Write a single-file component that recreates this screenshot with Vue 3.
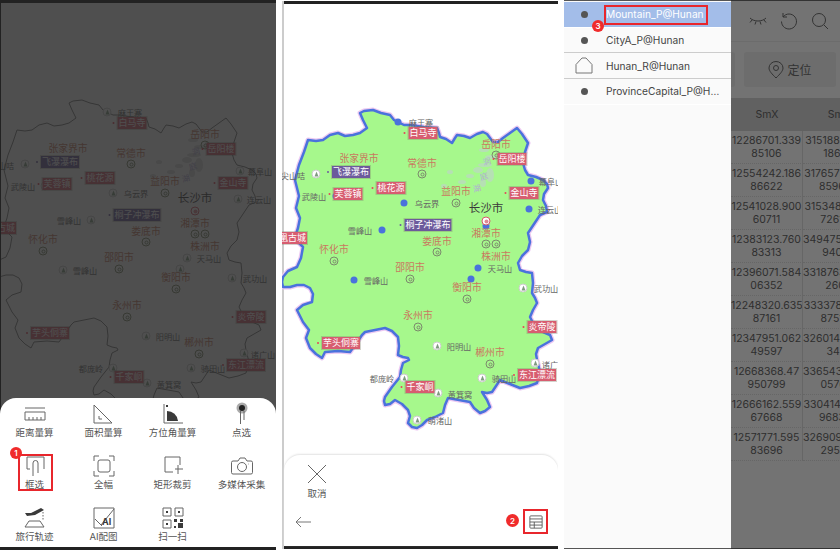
<script setup>
const mapShapes = [
  { kind: 'dim', tree: true },
  { kind: 'live', tree: false },
]

const outline = '360,113 364,111 373,110 381,113 390,115 394,120 398,122 404,125 410,125 424,127 437,128 439,133 440,137 446,139 452,143 455,138 457,135 464,136 470,138 477,134 483,132 487,134 493,142 498,142 503,138 510,133 517,128 522,134 528,143 525,152 523,163 525,170 528,175 536,177 543,180 547,184 548,188 544,194 543,200 546,206 547,212 540,215 534,224 528,233 530,242 528,250 522,256 518,263 520,270 526,272 532,273 533,283 532,293 535,298 537,303 533,310 530,317 534,325 543,332 550,335 552,340 545,344 538,348 536,354 537,360 540,372 537,383 529,386 520,388 510,384 500,380 496,386 492,392 487,393 482,392 487,400 490,407 485,411 480,413 474,408 470,402 459,400 448,398 445,405 443,413 435,417 427,420 422,425 417,428 412,427 408,423 410,416 408,410 402,404 395,400 390,404 385,405 384,401 385,397 392,387 400,377 401,370 403,363 409,360 408,358 403,357 398,355 399,346 398,337 392,331 385,328 375,330 365,332 362,335 360,338 355,345 350,352 338,351 325,352 323,356 322,358 316,354 310,348 306,338 309,330 303,322 297,310 303,305 312,302 313,294 310,288 304,285 297,285 290,287 283,287 282,282 283,277 288,271 297,267 301,258 303,247 298,242 295,237 298,228 300,218 296,208 299,196 295,180 299,165 304,152 308,140 316,141 323,140 330,135 338,133 345,136 353,135 360,133 367,128 363,120'

const pondSpots = [
  [484, 150, 5, 2], [491, 157, 6, 2], [485, 165, 7, 2], [478, 170, 5, 3], [490, 175, 4, 7],
  [470, 176, 4, 2], [462, 182, 4, 2], [483, 183, 3, 4], [450, 172, 3, 2], [444, 186, 3, 2],
]

const cities = [
  ['张家界市', 359, 158], ['常德市', 422, 163], ['岳阳市', 496, 144], ['益阳市', 456, 191],
  ['湘潭市', 486, 233], ['娄底市', 437, 241], ['株洲市', 496, 256], ['怀化市', 334, 249],
  ['邵阳市', 410, 267], ['衡阳市', 467, 287], ['永州市', 418, 315], ['郴州市', 490, 352],
]
const rings = [
  [422, 174], [496, 155], [456, 203], [486, 244], [496, 244], [437, 252],
  [334, 261], [410, 279], [467, 299], [418, 327], [490, 364],
]
const blueDots = [
  [398, 122], [336, 196], [404, 203], [382, 230], [531, 181],
  [529, 209], [478, 268], [354, 280], [471, 279],
]
const trees = [
  [316, 174], [523, 288], [437, 346], [535, 363], [404, 378], [482, 378], [438, 393], [417, 420],
]
const places = [
  ['麻王寨', 421, 122], ['尖山咭', 293, 175], ['武陵山', 314, 196], ['乌云界', 427, 203],
  ['雪峰山', 360, 230], ['幕阜山', 551, 181], ['连云山', 550, 209], ['天马山', 500, 268],
  ['雪峰山', 376, 280], ['武功山', 546, 288], ['阳明山', 459, 346], ['诸广山', 554, 364],
  ['都庞岭', 382, 378], ['骑田山', 504, 378], ['黄箕窝', 460, 394], ['萌渚山', 440, 420],
]
const scenic = [
  ['白马寺', 423, 133, 'red'], ['岳阳楼', 512, 159, 'red'], ['桃花源', 391, 188, 'red'],
  ['芙蓉镇', 348, 194, 'red'], ['金山寺', 524, 193, 'red'], ['凤凰古城', 288, 238, 'red'],
  ['炎帝陵', 542, 327, 'red'], ['芋头侗寨', 341, 343, 'red'], ['千家峒', 420, 387, 'red'],
  ['东江漂流', 537, 375, 'red'], ['飞瀑瀑布', 351, 172, 'purple'], ['桐子冲瀑布', 428, 225, 'purple'],
]
const lake = [['洞', 488, 160], ['庭', 485, 175], ['湖', 478, 187]]

const at = (x, y) => ({ left: `${x - 282}px`, top: `${y}px` })

const tools = [
  { name: '距离量算', lines: ['M2 6h20', 'M2 10h20v8H2z', 'M6 18v-3M10 18v-3M14 18v-3M18 18v-3'] },
  { name: '面积量算', lines: ['M2 3l18 18H2z', 'M7 14v3h3'] },
  { name: '方位角量算', lines: ['M3 2v19h19'], fills: ['M6 9a11 11 0 0 1 11 10H6z', 'M5 3h2v2H5z'] },
  { name: '点选', lines: ['M10.500 9v13', 'M14 9v9'], spot: true },
  { name: '框选', lines: ['M4 15V3h17v12', 'M4 15h3', 'M10 22V9a2.500 2.500 0 0 1 5 0v10'], marked: true },
  { name: '全幅', lines: ['M2 7V2h5', 'M17 2h5v5', 'M22 17v5h-5', 'M7 22H2v-5', 'M8 6h8a2 2 0 0 1 2 2v8a2 2 0 0 1-2 2H8a2 2 0 0 1-2-2V8a2 2 0 0 1 2-2z'] },
  { name: '矩形裁剪', lines: ['M19 11V3H4v15h8', 'M14 15h8', 'M17 11v9'] },
  { name: '多媒体采集', lines: ['M3 7h5l2-3h5l2 3h4a1.500 1.500 0 0 1 1.500 1.500v10A1.500 1.500 0 0 1 21 20H3a1.500 1.500 0 0 1-1.500-1.500v-10A1.500 1.500 0 0 1 3 7z', 'M12 8.500a4.500 4.500 0 1 1 0 9 4.500 4.500 0 0 1 0-9z', 'M18.500 10h.5'] },
  { name: '旅行轨迹', lines: ['M6 15h11l4 6H2z', 'M20 6v8'], fills: ['M2 7h6l10-5 3 2-9 5-8 1z'], dashed: true },
  { name: 'AI配图', lines: ['M2 2h20v20H2z', 'M22 3L9 19', 'M3 13l7 7'], label: 'AI' },
  { name: '扫一扫', lines: ['M2 2h8v8H2z', 'M14 2h8v8h-8z', 'M2 14h8v8H2z'], fills: ['M5 5h2v2H5z', 'M17 5h2v2h-2z', 'M5 17h2v2H5z', 'M13 13h3v3h-3z', 'M19 13h3v3h-3z', 'M13 20h2v2h-2z', 'M17 17h5v5h-5z'] },
]

const layers = [
  { name: 'Mountain_P@Hunan', icon: 'dot', active: true },
  { name: 'CityA_P@Hunan', icon: 'dot' },
  { name: 'Hunan_R@Hunan', icon: 'area' },
  { name: 'ProvinceCapital_P@Hunan', icon: 'dot' },
]

const rows = [
  ['12286701.339', '85106', '3151886.2174', '18642'],
  ['12554242.186', '86622', '3176575.4210', '859603'],
  ['12541028.900', '60711', '3153487.3561', '726148'],
  ['12383123.760', '83313', '3494752.1832', '94037'],
  ['12396071.584', '06352', '3318763.0947', '2604'],
  ['12248320.635', '87161', '3333787.4126', '875129'],
  ['12347951.062', '49597', '3260149.7653', '3421'],
  ['12668368.47', '950799', '3365432.2816', '057613'],
  ['12666162.559', '67668', '3304141.6395', '968302'],
  ['12571771.595', '83696', '3269095.1408', '295187'],
]
</script>

<template>
  <div class="screens">
    <section v-for="shape in mapShapes" :key="shape.kind" class="phone" :class="`phone--${shape.kind}`">
      <div class="map">
        <svg class="map__land" viewBox="282 0 276 550" width="276" height="550">
          <polygon class="map__halo" :points="outline" />
          <polygon class="map__shape" :points="outline" />
          <ellipse v-for="(s, i) in pondSpots" :key="i" class="map__pond" :cx="s[0]" :cy="s[1]" :rx="s[2]" :ry="s[3]" />
        </svg>
        <span v-for="l in lake" :key="l[0]" class="tag tag--lake" :style="at(l[1], l[2])">{{ l[0] }}</span>
        <span v-for="(p, i) in blueDots" :key="'b' + i" class="pin" :class="shape.tree ? 'pin--tree' : 'pin--blue'" :style="at(p[0], p[1])"></span>
        <span v-for="(p, i) in trees" :key="'t' + i" class="pin pin--tree" :style="at(p[0], p[1])"></span>
        <span v-for="(p, i) in rings" :key="'r' + i" class="pin pin--ring" :style="at(p[0], p[1])"></span>
        <span v-if="!shape.tree" class="pin pin--blue" :style="at(486, 226)"></span>
        <span class="pin pin--capital" :style="at(486, 221)"></span>
        <span v-for="c in cities" :key="c[0]" class="tag tag--city" :style="at(c[1], c[2])">{{ c[0] }}</span>
        <span class="tag tag--capital" :style="at(486, 207)">长沙市</span>
        <span v-for="(p, i) in places" :key="'p' + i" class="tag tag--place" :style="at(p[1], p[2])">{{ p[0] }}</span>
        <span v-for="s in scenic" :key="s[0]" class="tag tag--box" :class="`tag--${s[3]}`" :style="at(s[1], s[2])">{{ s[0] }}</span>
      </div>

      <template v-if="shape.kind === 'dim'">
        <div class="phone__shade"></div>
        <div class="tools">
          <div v-for="tool in tools" :key="tool.name" class="tool">
            <svg class="tool__icon" viewBox="0 0 24 24" width="24" height="24">
              <circle v-if="tool.spot" cx="12" cy="6" r="5.500" fill="#aaa" stroke="none" />
              <circle v-if="tool.spot" cx="12" cy="6" r="3" fill="#222" stroke="none" />
              <path v-for="d in tool.lines" :key="d" :d="d" :stroke-dasharray="tool.dashed && d === 'M20 6v8' ? '1.500 1.500' : null" />
              <path v-for="d in tool.fills" :key="d" :d="d" class="tool__fill" />
              <text v-if="tool.label" x="10" y="19" class="tool__glyph">{{ tool.label }}</text>
            </svg>
            <span class="tool__name">{{ tool.name }}</span>
            <span v-if="tool.marked" class="tool__mark"></span>
            <span v-if="tool.marked" class="badge tool__badge">1</span>
          </div>
        </div>
      </template>

      <div v-else class="actions">
        <button class="actions__cancel">
          <svg viewBox="0 0 20 20" width="20" height="20"><path d="M1 1l18 18M19 1L1 19" /></svg>
          <span>取消</span>
        </button>
        <div class="actions__bar">
          <svg viewBox="0 0 16 12" width="16" height="12"><path d="M6 1L1 6l5 5M1 6h15" /></svg>
          <span class="badge actions__badge">2</span>
          <span class="actions__table">
            <svg viewBox="0 0 16 16" width="14" height="14"><path d="M2 1h12a1 1 0 0 1 1 1v12a1 1 0 0 1-1 1H2a1 1 0 0 1-1-1V2a1 1 0 0 1 1-1z" /><path d="M1 4.500h14M1 8h14M1 11.500h14M6 8v7" /></svg>
          </span>
        </div>
      </div>
    </section>

    <section class="phone phone--data">
      <aside class="layers">
        <div v-for="layer in layers" :key="layer.name" class="layer" :class="{ 'layer--active': layer.active }">
          <span class="layer__icon">
            <i v-if="layer.icon === 'dot'" class="layer__dot"></i>
            <svg v-else viewBox="0 0 18 17" width="18" height="17"><path d="M1 7.500L7 1h4l6 6.500V16H1z" /></svg>
          </span>
          <span class="layer__name">{{ layer.name }}</span>
          <template v-if="layer.active">
            <span class="layer__mark"></span>
            <span class="badge layer__badge">3</span>
          </template>
        </div>
      </aside>

      <div class="attrs">
        <div class="attrs__tools">
          <svg viewBox="0 0 18 10" width="18" height="10"><path d="M1 2c4 4 12 4 16 0M3 4L1 6.500M7 5.500L6 8.500M11 5.500l1 3M15 4l2 2.500" /></svg>
          <svg viewBox="0 0 18 18" width="18" height="18"><path d="M3 5a7.500 7.500 0 1 1-1.500 4.500M3 1v4h4" /></svg>
          <svg viewBox="0 0 18 18" width="18" height="18"><path d="M8 1.500a6.500 6.500 0 1 1 0 13 6.500 6.500 0 0 1 0-13zM13 13l4 4" /></svg>
        </div>
        <div class="attrs__buttons">
          <span class="attrs__button"></span>
          <span class="attrs__button">
            <svg viewBox="0 0 16 18" width="16" height="18"><path d="M8 17c-4-4-7-7-7-10a7 6.500 0 0 1 14 0c0 3-3 6-7 10zM8 4.500a2.500 2.500 0 1 1 0 5 2.500 2.500 0 0 1 0-5z" /></svg>
            定位
          </span>
        </div>
        <div class="grid">
          <div class="grid__head">SmX</div>
          <div class="grid__head">SmY</div>
          <template v-for="row in rows" :key="row[0]">
            <div class="grid__cell">{{ row[0] }}<br>{{ row[1] }}</div>
            <div class="grid__cell">{{ row[2] }}<br>{{ row[3] }}</div>
          </template>
        </div>
      </div>
    </section>
  </div>
</template>

<style>
html,
body {
  background: #fff;
}
</style>

<style scoped>
.screens {
  display: flex;
  gap: 6px;
  width: 840px;
  height: 550px;
  overflow: hidden;
  font-family: Inter, "Noto Sans CJK SC", sans-serif;
  background: #fff;
}

.phone {
  position: relative;
  display: flex;
  flex-direction: column;
  width: 276px;
  overflow: hidden;
  background: #fff;
}
.phone--dim {
  height: 550px;
}
.phone--live {
  height: 548px;
  margin-top: 1px;
  box-shadow: inset 2px 0 0 #ccc, inset 0 3px 0 #222, inset 0 -3px 0 #222;
}
.phone--data {
  flex-direction: row;
  height: 549px;
}

.map {
  position: absolute;
  top: 0;
  left: 0;
  width: 276px;
  height: 550px;
  font-family: "Noto Sans CJK SC", sans-serif;
}
.phone--dim .map {
  transform: translate(-9px, -10px);
  opacity: 0.6;
}
.phone--live .map {
  transform: translateY(-1px);
}
.map__land {
  position: absolute;
  inset: 0;
}
.map__halo {
  fill: none;
  stroke: #ecc8f2;
  stroke-width: 5;
  stroke-linejoin: round;
}
.map__shape {
  fill: #a6f88c;
  stroke: #4a72dc;
  stroke-width: 2.500;
  stroke-linejoin: round;
}
.map__pond {
  fill: #b6e0b4;
}
.phone--dim .map__halo {
  display: none;
}
.phone--dim .map__shape {
  fill: #fff;
  stroke: #777;
  stroke-width: 1;
}
.phone--dim .map__pond {
  fill: #ddd;
}

.pin {
  position: absolute;
  border-radius: 50%;
  transform: translate(-50%, -50%);
  box-sizing: border-box;
}
.pin--blue {
  width: 7px;
  height: 7px;
  background: #4a72dc;
}
.pin--tree {
  width: 9px;
  height: 9px;
  background: #fff;
  border: 1px solid #ccc;
}
.pin--tree::after {
  content: "";
  position: absolute;
  left: 1.500px;
  top: 1px;
  border-left: 2px solid transparent;
  border-right: 2px solid transparent;
  border-bottom: 5px solid #7f9a7f;
}
.pin--ring {
  width: 9px;
  height: 9px;
  border: 1px solid #7c8a6c;
}
.pin--ring::after {
  content: "";
  position: absolute;
  inset: 1.500px;
  border: 1px solid #7c8a6c;
  border-radius: 50%;
}
.pin--capital {
  z-index: 1;
  width: 9px;
  height: 9px;
  background: #fff;
  border: 1px solid #d85a6a;
}
.pin--capital::after {
  content: "";
  position: absolute;
  inset: 1.500px;
  background: #e08a94;
  border-radius: 50%;
}

.tag {
  position: absolute;
  white-space: nowrap;
  transform: translate(-50%, -50%);
}
.tag--city {
  font-size: 9.800px;
  line-height: 13px;
  color: #c9795f;
}
.tag--capital {
  font-size: 11.500px;
  line-height: 15px;
  color: #3a3a3a;
}
.tag--place {
  font-size: 8.200px;
  line-height: 11px;
  color: #666;
}
.tag--lake {
  font-size: 8px;
  line-height: 10px;
  color: #b3abd8;
  rotate: -15deg;
}
.tag--box {
  padding: 0 1px;
  font-size: 9px;
  line-height: 12px;
  color: #fff;
  outline: 1px solid rgba(130, 130, 110, 0.35);
}
.tag--box::before {
  content: "";
  position: absolute;
  left: -5px;
  top: 5px;
  width: 2px;
  height: 2px;
  border-radius: 50%;
}
.tag--red {
  background: #d75d70;
}
.tag--red::before {
  background: #e2485a;
}
.tag--purple {
  background: #6c5a9c;
}
.tag--purple::before {
  background: #6c5a9c;
}

.phone__shade {
  position: absolute;
  inset: 0;
  background: rgba(0, 0, 0, 0.69);
  box-shadow: inset 1px 3px 0 #222, inset 0 -3px 0 #222;
}

.tools {
  position: relative;
  display: grid;
  grid-template-columns: repeat(4, 69px);
  grid-auto-rows: 52px;
  height: 149px;
  margin-top: auto;
  margin-bottom: 3px;
  padding-top: 4px;
  background: #fff;
  border-radius: 16px 16px 0 0;
  box-sizing: border-box;
}
.tool {
  position: relative;
  display: flex;
  flex-direction: column;
  align-items: center;
}
.tool__icon {
  flex: none;
  fill: none;
  stroke: #666;
  stroke-width: 1;
}
.tool__fill {
  fill: #3a3a3a;
  stroke: none;
}
.tool__glyph {
  fill: #3a3a3a;
  stroke: none;
  font-family: Inter, sans-serif;
  font-size: 9px;
  font-weight: 700;
}
.tool__name {
  font-size: 9.500px;
  line-height: 14px;
  color: #555;
  white-space: nowrap;
}
.tool__mark {
  position: absolute;
  left: 18px;
  top: 0;
  width: 35px;
  height: 37px;
  border: 2px solid #e8262c;
  box-sizing: border-box;
}
.tool__badge {
  left: 10px;
  top: -7px;
}

.badge {
  position: absolute;
  display: flex;
  align-items: center;
  justify-content: center;
  width: 12px;
  height: 12px;
  border-radius: 50%;
  background: #f02b2b;
  color: #fff;
  font-family: Inter, sans-serif;
  font-size: 8px;
  font-weight: 600;
  line-height: 1;
}

.actions {
  position: relative;
  display: flex;
  flex-direction: column;
  height: 91px;
  margin-top: auto;
  margin-bottom: 3px;
  margin-left: 2px;
  background: #fff;
  border-radius: 16px 16px 0 0;
  box-shadow: 0 -1px 2px #e2e2e2;
  box-sizing: border-box;
}
.actions__cancel {
  display: flex;
  flex-direction: column;
  align-items: center;
  gap: 2px;
  width: 40px;
  margin: 9px 0 0 13px;
  padding: 0;
  background: none;
  border: 0;
  font-family: "Noto Sans CJK SC", sans-serif;
  font-size: 9.500px;
  line-height: 14px;
  color: #555;
}
.actions__cancel svg {
  fill: none;
  stroke: #666;
  stroke-width: 1;
}
.actions__bar {
  position: relative;
  display: flex;
  align-items: center;
  justify-content: space-between;
  margin-top: 9px;
  padding: 0 10px 0 11px;
}
.actions__bar > svg {
  fill: none;
  stroke: #777;
  stroke-width: 1;
}
.actions__badge {
  right: 39px;
  top: 5px;
  width: 13px;
  height: 13px;
}
.actions__table {
  display: flex;
  align-items: center;
  justify-content: center;
  width: 25px;
  height: 25px;
  border: 2px solid #e8262c;
  box-sizing: border-box;
}
.actions__table svg {
  fill: none;
  stroke: #555;
  stroke-width: 1;
}

.layers {
  flex: none;
  width: 167px;
  padding-top: 2px;
  background: #fafafa;
  box-shadow: inset 0 1px 0 #555, inset 0 -1px 0 #555;
}
.layer {
  position: relative;
  display: flex;
  align-items: center;
  height: 25.700px;
  font-size: 10.200px;
  color: #444;
  border-bottom: 1px solid #fff;
  box-sizing: border-box;
}
.layer:nth-child(2),
.layer:nth-child(3) {
  border-bottom: 1.500px solid #ccc;
}
.layer--active {
  background: #a3bde9;
  color: #fff;
}
.layer__icon {
  display: flex;
  align-items: center;
  justify-content: center;
  flex: none;
  width: 42px;
  padding-right: 2px;
  box-sizing: border-box;
}
.layer__icon svg {
  fill: none;
  stroke: #777;
  stroke-width: 1;
}
.layer__dot {
  width: 7px;
  height: 7px;
  border-radius: 50%;
  background: #555;
}
.layer__name {
  overflow: hidden;
  white-space: nowrap;
  text-overflow: ellipsis;
  max-width: 116px;
}
.layer__mark {
  position: absolute;
  left: 40px;
  top: 3px;
  width: 104px;
  height: 20px;
  border: 2px solid #e8262c;
  box-sizing: border-box;
}
.layer__badge {
  left: 28px;
  top: 18px;
  z-index: 1;
}

.attrs {
  flex: none;
  width: 109px;
  height: 549px;
  overflow: hidden;
  background: #737373;
  box-shadow: inset 0 1px 0 #333, inset 0 -1px 0 #333;
}
.attrs__tools {
  display: flex;
  align-items: center;
  justify-content: flex-end;
  gap: 13px;
  height: 42px;
  padding: 0 11px 0 0;
  box-sizing: border-box;
  border-bottom: 1px solid #6c6c6c;
}
.attrs__tools svg,
.attrs__button svg {
  flex: none;
  fill: none;
  stroke: #333;
  stroke-width: 1;
}
.attrs__buttons {
  display: flex;
  gap: 9px;
  height: 56px;
  padding: 10px 0 0;
  box-sizing: border-box;
  margin-left: -20px;
  width: 140px;
}
.attrs__button {
  display: flex;
  align-items: center;
  justify-content: center;
  gap: 3px;
  flex: none;
  width: 24px;
  height: 35px;
  background: #6d6d6d;
  border-radius: 3px;
  font-family: "Noto Sans CJK SC", sans-serif;
  font-size: 12px;
  color: #333;
  white-space: nowrap;
}
.attrs__button + .attrs__button {
  width: 92px;
}
.grid {
  display: grid;
  grid-template-columns: 72px 72px;
  grid-auto-rows: 33px;
  width: 144px;
  font-size: 10.500px;
  line-height: 13px;
  color: #2e2e2e;
  text-align: center;
}
.grid__head {
  display: flex;
  align-items: center;
  justify-content: center;
  background: #616161;
}
.grid__cell {
  padding-top: 3px;
  white-space: nowrap;
  overflow: hidden;
  border-right: 1px solid #666;
  border-bottom: 1px dotted #666;
  box-sizing: border-box;
}
</style>
